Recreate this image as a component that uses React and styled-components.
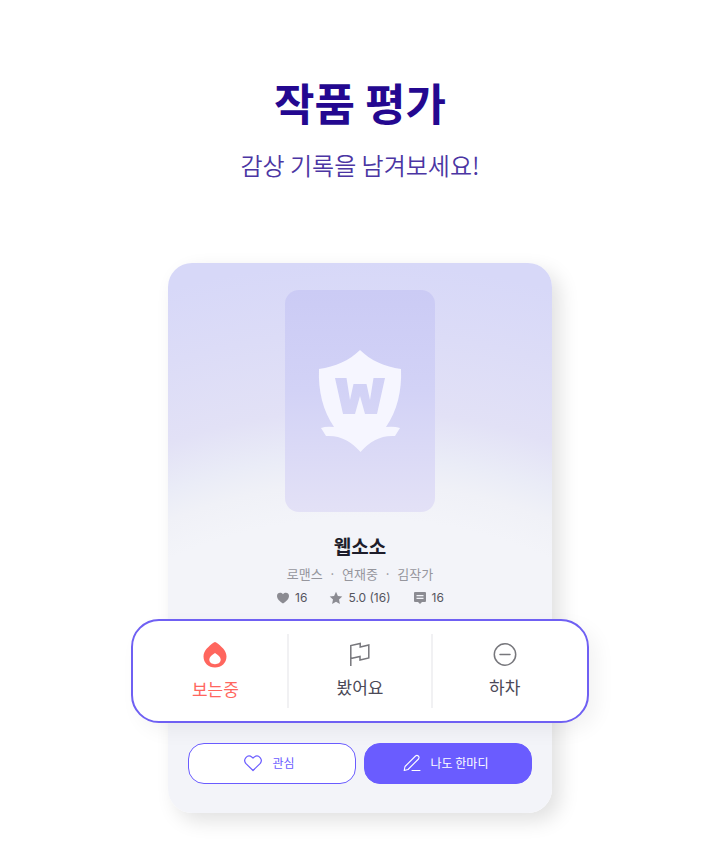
import React from "react";
import styled, { createGlobalStyle } from "styled-components";

const GlobalStyle = createGlobalStyle`
  *, *::before, *::after { box-sizing: border-box; }
  body {
    margin: 0;
    background: #ffffff;
    font-family: "Noto Sans CJK KR", "Noto Sans", sans-serif;
  }
`;

const Page = styled.main`
  display: flex;
  flex-direction: column;
  align-items: center;
  padding: 70px 40px 44px;
`;

const Title = styled.h1`
  margin: 0;
  font-size: 44px;
  line-height: 64px;
  font-weight: 700;
  color: #240890;
`;

const Subtitle = styled.p`
  margin: 13px 0 80px;
  font-size: 24px;
  line-height: 36px;
  font-weight: 350;
  color: #4b35a3;
`;

const Card = styled.article`
  display: flex;
  flex-direction: column;
  align-items: center;
  width: 100%;
  max-width: 384px;
  padding: 27px 20px 29px;
  border-radius: 24px;
  background: radial-gradient(
    circle at 50% 720px,
    #f3f4f9 465px,
    #f0f1f7 500px,
    #eaecf7 528px,
    #e2e1f6 573px,
    #dcdcf7 650px,
    #d7d8f8 720px
  );
  box-shadow: 8px 8px 20px rgba(0, 0, 0, 0.12);
`;

const Cover = styled.div`
  display: flex;
  align-items: center;
  justify-content: center;
  width: 150px;
  height: 222px;
  border-radius: 14px;
  background: linear-gradient(#cbcbf5, #d2d2f6 45%, #e3e1f6);
`;

const WorkTitle = styled.h2`
  margin: 19px 0 0;
  font-size: 19px;
  line-height: 30px;
  font-weight: 700;
  color: #1e1d2b;
`;

const Genre = styled.p`
  display: flex;
  gap: 6px;
  margin: 3px 0 0;
  font-size: 13px;
  line-height: 20px;
  color: #96969d;
`;

const Stats = styled.ul`
  display: flex;
  gap: 22px;
  margin: 5px 0 0;
  padding: 0;
  list-style: none;
`;

const Stat = styled.li`
  display: flex;
  align-items: center;
  gap: 5px;
  font-family: Inter, sans-serif;
  font-size: 12px;
  line-height: 18px;
  color: #55555e;

  svg { fill: #8b8b92; }
`;

const StatusPanel = styled.div`
  display: flex;
  align-self: stretch;
  margin: 12px -57px 20px;
  padding: 13px 11px;
  border: 2px solid #6f60f3;
  border-radius: 28px;
  background: #ffffff;
  box-shadow: 8px 8px 20px rgba(0, 0, 0, 0.05);
`;

const StatusButton = styled.button`
  display: flex;
  flex: 1;
  flex-direction: column;
  align-items: center;
  gap: 6px;
  padding: 7px 0 5px;
  border: 0;
  background: none;
  font-family: inherit;
  font-size: 17px;
  line-height: 28px;
  color: ${({ $active }) => ($active ? "#ff665e" : "#4b4957")};
  cursor: pointer;

  & + & { border-left: 2px solid #f1f1f3; }
`;

const Actions = styled.div`
  display: flex;
  align-self: stretch;
  gap: 8px;
`;

const ActionButton = styled.button`
  display: flex;
  flex: 1;
  align-items: center;
  justify-content: center;
  gap: 9px;
  height: 41px;
  padding: 0 18px 2px 12px;
  border: 1px solid #6a5cff;
  border-radius: 16px;
  background: ${({ $filled }) => ($filled ? "#6a5cff" : "#ffffff")};
  color: ${({ $filled }) => ($filled ? "#ffffff" : "#6a5cff")};
  font-family: inherit;
  font-size: 12px;
  line-height: 20px;
  cursor: pointer;
`;

const Emblem = () => (
  <svg width="84" height="104" viewBox="0 0 84 104" aria-hidden="true">
    <path
      fill="#f6f6ff"
      fillRule="evenodd"
      d="M42 1C52 11 67 18 83 20C84 42 79 62 68 78Q76 77 82 79L77 87C63 86 52 92 42.500 103C33 92 22 86 8 87L3 79Q8 77 16 78C5 62 0 42 1 20C17 18 32 11 42 1ZM17 29L25 65H37L42 47L47 65H59L67 29H55.500L52 51L48.500 35H35.500L32 51L28.500 29Z"
    />
  </svg>
);

const SmallHeart = () => (
  <svg width="14" height="14" viewBox="0 0 14 14" aria-hidden="true">
    <path d="M7 12.500C4 10.500 1 8 1 5C1 1.500 5 .7 7 3.200C9 .7 13 1.500 13 5C13 8 10 10.500 7 12.500Z" />
  </svg>
);

const SmallStar = () => (
  <svg width="14" height="14" viewBox="0 0 14 14" aria-hidden="true">
    <path d="M7 .8L8.900 4.900L13.300 5.400L10 8.400L10.900 12.900L7 10.700L3.100 12.900L4 8.400L.7 5.400L5.100 4.900Z" />
  </svg>
);

const SmallComment = () => (
  <svg width="14" height="14" viewBox="0 0 14 14" aria-hidden="true">
    <path
      fillRule="evenodd"
      d="M2 1H12Q13 1 13 2V10Q13 11 12 11H9L7 13L5 11H2Q1 11 1 10V2Q1 1 2 1ZM3.500 4V5.200H10.500V4ZM3.500 6.800V8H10.500V6.800Z"
    />
  </svg>
);

const Flame = () => (
  <svg width="26" height="28" viewBox="0 0 26 28" aria-hidden="true">
    <path
      fill="#ff665e"
      fillRule="evenodd"
      d="M11.800 1.500Q13 .5 14.200 1.500C19 5 24.500 9.500 24.500 15.500C24.500 22 19.500 26.500 13 26.500C6.500 26.500 1.500 22 1.500 15.500C1.500 9.500 7 5 11.800 1.500ZM13 12C10 13.800 7.300 16 7.300 18.600C7.300 21.500 9.800 23.200 13 23.200C16.200 23.200 18.700 21.500 18.700 18.600C18.700 16 16 13.800 13 12Z"
    />
  </svg>
);

const Flag = () => (
  <svg width="26" height="26" viewBox="0 0 26 26" fill="none" stroke="#77777c" strokeWidth="1.500" aria-hidden="true">
    <path d="M3.800 25V4.500L13.200 2.500V6L21.800 4V17L13 19V15.500L3.800 17.500" />
  </svg>
);

const MinusCircle = () => (
  <svg width="26" height="26" viewBox="0 0 26 26" fill="none" stroke="#77777c" strokeWidth="1.500" aria-hidden="true">
    <circle cx="13" cy="13.500" r="10.700" />
    <path d="M8 13.500H18" strokeLinecap="round" />
  </svg>
);

const HeartOutline = () => (
  <svg width="20" height="20" viewBox="0 0 20 20" fill="none" stroke="currentColor" strokeWidth="1.200" strokeLinejoin="round" aria-hidden="true">
    <path d="M10 17.500L3.200 10.900C-.8 6.600 4.500 .6 9 4.200L10 5.200L11 4.200C15.500 .6 20.800 6.600 16.800 10.900Z" />
  </svg>
);

const Pencil = () => (
  <svg width="20" height="20" viewBox="0 0 20 20" fill="none" stroke="currentColor" strokeWidth="1.100" strokeLinecap="round" strokeLinejoin="round" aria-hidden="true">
    <path d="M2.200 17.500L3 13.500L13.500 3Q15 1.800 16.300 3Q17.700 4.400 16.500 6L6 16.500ZM10 17.500H18" />
  </svg>
);

export default function App() {
  return (
    <>
      <GlobalStyle />
      <Page>
        <Title>작품 평가</Title>
        <Subtitle>감상 기록을 남겨보세요!</Subtitle>
        <Card>
          <Cover><Emblem /></Cover>
          <WorkTitle>웹소소</WorkTitle>
          <Genre>
            <span>로맨스</span>
            <span>·</span>
            <span>연재중</span>
            <span>·</span>
            <span>김작가</span>
          </Genre>
          <Stats>
            <Stat><SmallHeart />16</Stat>
            <Stat><SmallStar />5.0 (16)</Stat>
            <Stat><SmallComment />16</Stat>
          </Stats>
          <StatusPanel>
            <StatusButton type="button" $active aria-pressed="true"><Flame />보는중</StatusButton>
            <StatusButton type="button" aria-pressed="false"><Flag />봤어요</StatusButton>
            <StatusButton type="button" aria-pressed="false"><MinusCircle />하차</StatusButton>
          </StatusPanel>
          <Actions>
            <ActionButton type="button"><HeartOutline />관심</ActionButton>
            <ActionButton type="button" $filled><Pencil />나도 한마디</ActionButton>
          </Actions>
        </Card>
      </Page>
    </>
  );
}
